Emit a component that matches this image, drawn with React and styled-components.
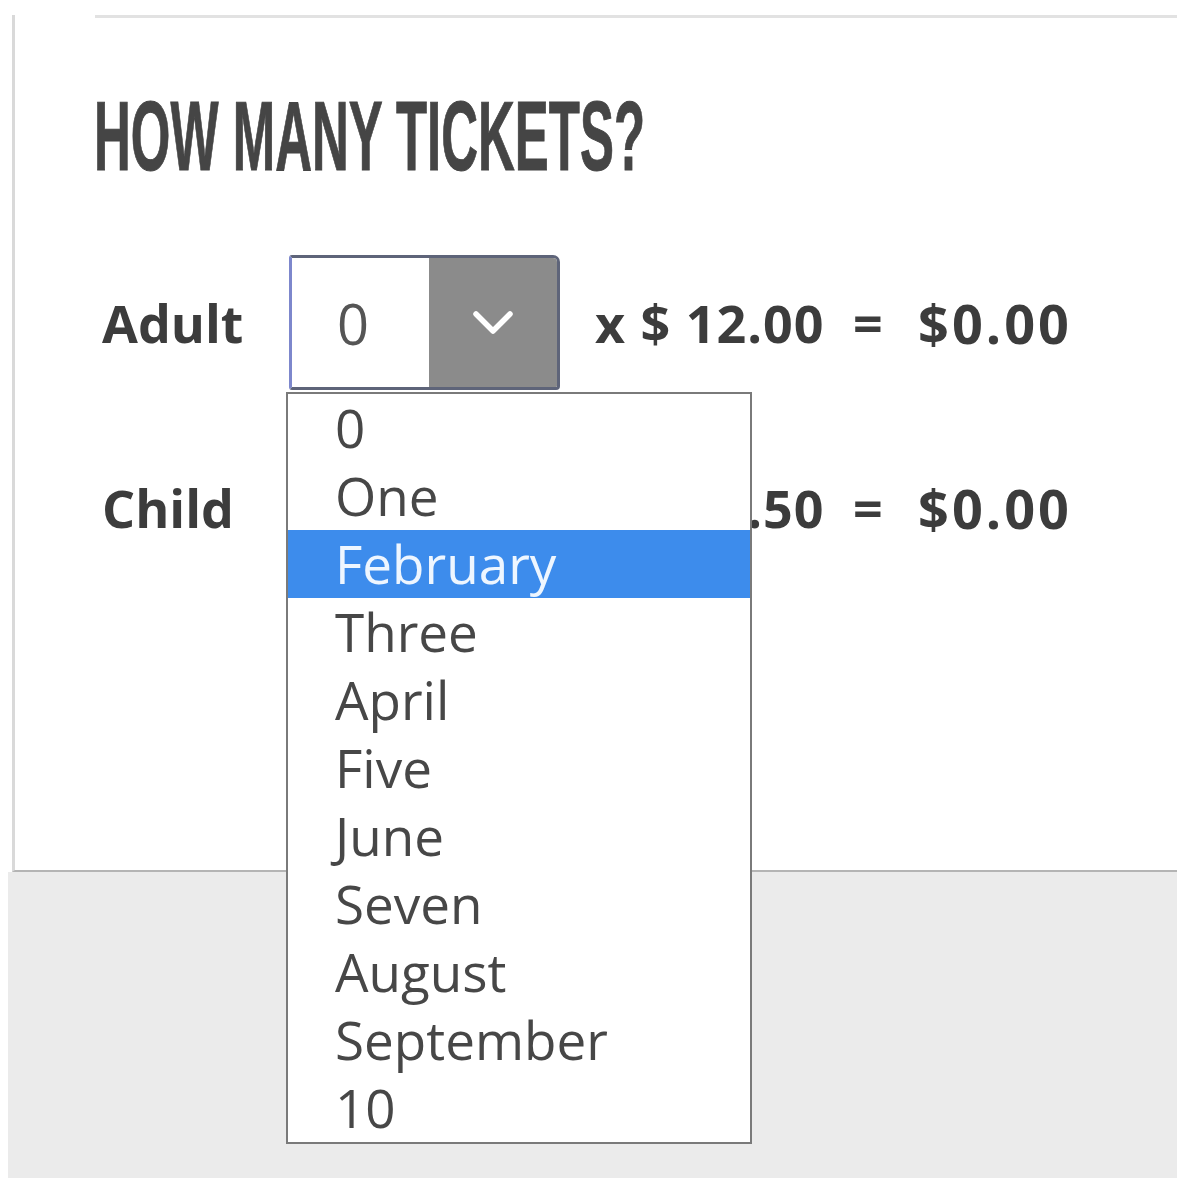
import React from "react";
import styled, { createGlobalStyle } from "styled-components";

const GlobalStyle = createGlobalStyle`
    body {
        margin: 0;
        background: #ffffff;
        font-family: "Open Sans", "Liberation Sans", sans-serif;
    }
`;

const options = ["0", "One", "February", "Three", "April", "Five", "June", "Seven", "August", "September", "10"];

const tickets = [
    { label: "Adult", price: "x $ 12.00", open: true },
    { label: "Child", price: "x $ 10.50", open: false },
];

const Chevron = () => (
    <svg width="46" height="32" viewBox="0 0 46 32">
        <polyline points="6,7 23,24 40,7" fill="none" stroke="#ffffff" strokeWidth="5.5" strokeLinecap="round" strokeLinejoin="round" />
    </svg>
);

const App = () => {
    return (
        <Page>
            <GlobalStyle />
            <Card>
                <TopRule />
                <Heading>
                    <span>HOW MANY TICKETS?</span>
                </Heading>
                <Rows>
                    {tickets.map((t) => (
                        <Row key={t.label}>
                            <Label>{t.label}</Label>
                            <SelectWrap>
                                <SelectBox>
                                    <Value>0</Value>
                                    <Toggle>
                                        <Chevron />
                                    </Toggle>
                                </SelectBox>
                                {t.open && (
                                    <Menu>
                                        {options.map((o, i) => (
                                            <Option key={o} $active={i === 2}>{o}</Option>
                                        ))}
                                    </Menu>
                                )}
                            </SelectWrap>
                            <Price>{t.price}</Price>
                            <Equals>=</Equals>
                            <Total>$0.00</Total>
                        </Row>
                    ))}
                </Rows>
            </Card>
            <Footer />
        </Page>
    );
};

/* page shell */
const Page = styled.div`
    width: 1177px;
    height: 1181px;
    padding-left: 8px;
    display: flex;
    flex-direction: column;
    padding-top: 15px;
    box-sizing: border-box;
`;

const Card = styled.div`
    margin-left: 4px;
    height: 857px;
    box-sizing: border-box;
    border-left: 3px solid #d9d9d9;
    border-bottom: 2px solid #b4b4b4;
    background: #ffffff;
    position: relative;
    z-index: 1;
`;

const TopRule = styled.div`
    margin-left: 80px;
    height: 3px;
    background: #e2e2e2;
`;

const Heading = styled.h1`
    margin: 69px 0 0 79px;
    height: 98px;
    font-family: "Liberation Sans", Arial, sans-serif;
    font-weight: 700;
    font-size: 98px;
    line-height: 98px;
    color: #454545;
    white-space: nowrap;
    span {
        display: inline-block;
        transform: scaleX(0.52);
        transform-origin: left center;
        -webkit-text-stroke: 1px #454545;
    }
`;

/* ticket rows */
const Rows = styled.div`
    margin-top: 70px;
    padding-left: 87px;
    display: flex;
    flex-direction: column;
    gap: 50px;
`;

const Row = styled.div`
    display: grid;
    grid-template-columns: 187px 271px 293px 65px auto;
    align-items: center;
    height: 135px;
    font-weight: 700;
    font-size: 52px;
    line-height: 1;
    color: #3c3c3c;
`;

const Label = styled.div``;

const SelectWrap = styled.div`
    position: relative;
    height: 135px;
`;

const SelectBox = styled.div`
    display: flex;
    height: 100%;
    box-sizing: border-box;
    border: 3px solid #5e6479;
    border-left-color: #7d87cc;
    border-radius: 3px 7px 4px 3px;
    overflow: hidden;
`;

const Value = styled.div`
    width: 137px;
    padding-left: 45px;
    box-sizing: border-box;
    display: flex;
    align-items: center;
    font-weight: 400;
    font-size: 56px;
    color: #555555;
    background: #ffffff;
`;

const Toggle = styled.div`
    flex: 1;
    background: #8b8b8b;
    display: flex;
    align-items: center;
    justify-content: center;
`;

/* open dropdown list, lies over the rows below */
const Menu = styled.ul`
    position: absolute;
    top: 137px;
    left: -3px;
    width: 466px;
    margin: 0;
    padding: 0;
    list-style: none;
    box-sizing: border-box;
    border: 2px solid #7a7a7a;
    background: #ffffff;
    z-index: 10;
`;

const Option = styled.li`
    height: 68px;
    padding-left: 47px;
    font-weight: 400;
    font-size: 53px;
    line-height: 68px;
    color: ${(p) => (p.$active ? "#eef6ff" : "#474747")};
    background: ${(p) => (p.$active ? "#3d8cec" : "transparent")};
`;

const Price = styled.div`
    padding-left: 35px;
    white-space: nowrap;
    letter-spacing: 1px;
`;

const Equals = styled.div``;

const Total = styled.div`
    font-size: 54px;
    letter-spacing: 3px;
`;

const Footer = styled.div`
    height: 306px;
    background: #ebebeb;
`;

export default App;
